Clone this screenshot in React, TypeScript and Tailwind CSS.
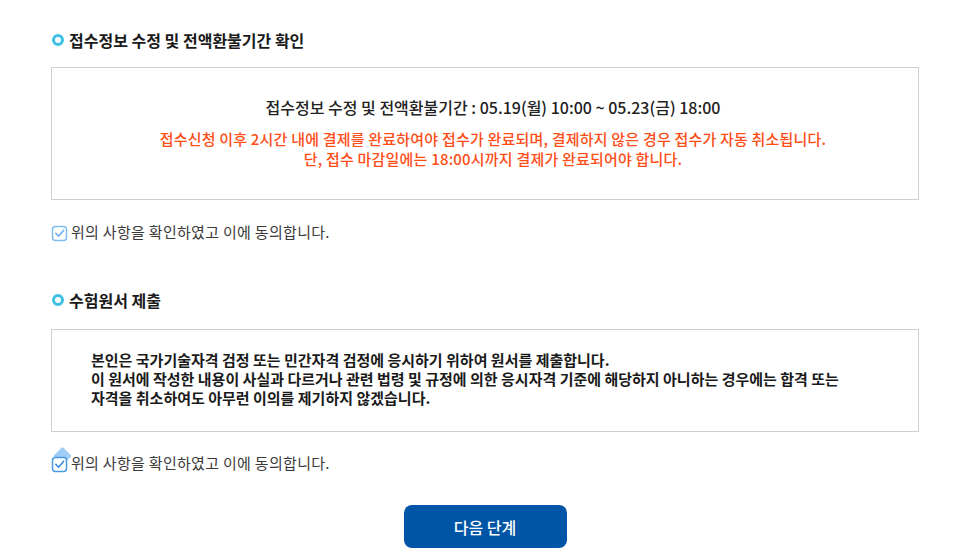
import React from 'react';

const FONT = { fontFamily: '"Noto Sans CJK KR", "Noto Sans", sans-serif' };

const SectionTitle: React.FC<{ children: React.ReactNode }> = ({ children }) => (
  <h3 className="flex items-center gap-[5px] text-[16px] leading-[24px] font-bold text-[#1a1a1a]">
    <span className="w-[12px] h-[12px] rounded-full border-[3px] border-[#3ec0e2] ml-[1px]" />
    {children}
  </h3>
);

const CheckIcon: React.FC<{ focused?: boolean }> = ({ focused }) => (
  <svg width="20" height="24" viewBox="0 0 20 24" className="shrink-0 overflow-visible">
    {focused && (
      <rect x="5" y="-0.5" width="13" height="13" rx="1.5" transform="rotate(45 11.5 6)" fill="#9fcdf5" />
    )}
    <rect x="1.5" y="7.5" width="14" height="14" rx="3" fill="#fff" stroke={focused ? '#4a9ae6' : '#7fbcef'} strokeWidth="1.5" />
    <path d="M4.8 14.3 L7.6 17.2 L12.6 11.2" fill="none" stroke={focused ? '#3d8ee0' : '#6fb0ec'} strokeWidth="1.6" strokeLinecap="round" strokeLinejoin="round" />
  </svg>
);

const AgreeRow: React.FC<{ focused?: boolean }> = ({ focused }) => (
  <label className="flex items-end h-[24px] text-[15px] leading-[22px] tracking-[0.3px] text-[#3a3a3a]">
    <CheckIcon focused={focused} />
    <span>위의 사항을 확인하였고 이에 동의합니다.</span>
  </label>
);

export default function App() {
  return (
    <div className="min-h-screen bg-white" style={FONT}>
      <div className="w-[868px] ml-[51px] pt-[28px]">
        {/* 접수정보 수정 */}
        <SectionTitle>접수정보 수정 및 전액환불기간 확인</SectionTitle>
        <div className="mt-[15px] h-[133px] border border-[#cfcfcf] pt-[27px] pl-[16px] text-center">
          <p className="text-[16px] leading-[24px] font-medium text-[#222]">
            접수정보 수정 및 전액환불기간 : 05.19(월) 10:00 ~ 05.23(금) 18:00
          </p>
          <div className="mt-[10px] text-[15px] leading-[20px] tracking-[0.2px] font-medium text-[#ff4d17]">
            <p>접수신청 이후 2시간 내에 결제를 완료하여야 접수가 완료되며, 결제하지 않은 경우 접수가 자동 취소됩니다.</p>
            <p>단, 접수 마감일에는 18:00시까지 결제가 완료되어야 합니다.</p>
          </div>
        </div>
        <div className="mt-[19px]">
          <AgreeRow />
        </div>

        {/* 수험원서 제출 */}
        <div className="mt-[45px]">
          <SectionTitle>수험원서 제출</SectionTitle>
        </div>
        <div className="mt-[17px] h-[103px] border border-[#cfcfcf] pt-[20px] pl-[39px] text-[15px] leading-[19px] font-bold text-[#1a1a1a]">
          <p>본인은 국가기술자격 검정 또는 민간자격 검정에 응시하기 위하여 원서를 제출합니다.</p>
          <p>이 원서에 작성한 내용이 사실과 다르거나 관련 법령 및 규정에 의한 응시자격 기준에 해당하지 아니하는 경우에는 합격 또는</p>
          <p>자격을 취소하여도 아무런 이의를 제기하지 않겠습니다.</p>
        </div>
        <div className="mt-[18px]">
          <AgreeRow focused />
        </div>

        <div className="mt-[31px] flex justify-center">
          <button className="w-[163px] h-[43px] rounded-[8px] bg-[#0055a6] text-white text-[16px] font-medium">
            다음 단계
          </button>
        </div>
      </div>
    </div>
  );
}
